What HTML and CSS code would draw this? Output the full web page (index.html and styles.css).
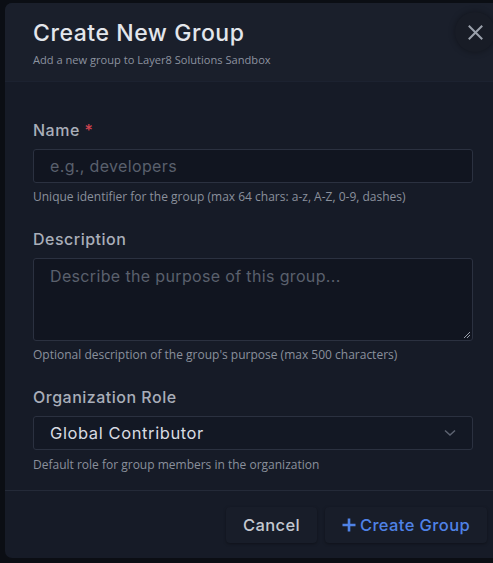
FILE: index.html
```html
<!DOCTYPE html>
<html>
<head>
<meta charset="utf-8">
<link rel="stylesheet" href="styles.css">
</head>
<body>
<div class="modal">
  <div class="modal-header">
    <h1 class="title">Create New Group</h1>
    <p class="subtitle">Add a new group to Layer8 Solutions Sandbox</p>
    <button class="close" aria-label="Close">
      <svg width="15" height="15" viewBox="0 0 15 15"><path d="M1.5 1.5 L13.5 13.5 M13.5 1.5 L1.5 13.5" stroke="#9aa0ab" stroke-width="2" stroke-linecap="square" fill="none"/></svg>
    </button>
  </div>
  <div class="modal-body">
    <div class="field">
      <label class="label">Name <span class="req">*</span></label>
      <div class="input"><span class="placeholder">e.g., developers</span></div>
      <p class="help">Unique identifier for the group (max 64 chars: a-z, A-Z, 0-9, dashes)</p>
    </div>
    <div class="field">
      <label class="label">Description</label>
      <div class="input textarea"><span class="placeholder">Describe the purpose of this group...</span>
        <svg class="grip" width="8" height="8" viewBox="0 0 8 8"><path d="M7 1 L1 7 M7 4 L4 7" stroke="#9aa0ab" stroke-width="1" fill="none"/></svg>
      </div>
      <p class="help">Optional description of the group's purpose (max 500 characters)</p>
    </div>
    <div class="field">
      <label class="label">Organization Role</label>
      <div class="input select"><span class="value">Global Contributor</span>
        <svg width="12" height="8" viewBox="0 0 12 8"><path d="M1 1.5 L6 6 L11 1.5" stroke="#5d6371" stroke-width="1.5" fill="none"/></svg>
      </div>
      <p class="help help-last">Default role for group members in the organization</p>
    </div>
  </div>
  <div class="modal-footer">
    <button class="btn btn-cancel">Cancel</button>
    <button class="btn btn-primary"><svg width="14" height="14" viewBox="0 0 14 14"><path d="M7 0.5 V13.5 M0.5 7 H13.5" stroke="#4f82e6" stroke-width="2.6" fill="none"/></svg>Create Group</button>
  </div>
</div>
</body>
</html>
```
FILE: styles.css
```css
html, body {
  margin: 0;
  padding: 0;
  background: #0b0e14;
  overflow: hidden;
  height: 563px;
}
body {
  padding: 3px 0 0 5px;
  box-sizing: border-box;
  font-family: "Inter", "Open Sans", sans-serif;
}
.modal {
  width: 496px;
  height: 555px;
  background: #161b27;
  border-radius: 7px;
  overflow: hidden;
  display: flex;
  flex-direction: column;
}
.modal-header {
  position: relative;
  height: 79px;
  background: #1a1f2b;
  padding: 15px 28px 0 28px;
  box-sizing: border-box;
  border-bottom: 1px solid #1c2230;
}
.title {
  margin: 0;
  font-size: 23px;
  font-weight: 500;
  color: #e3e6ec;
  line-height: 30px;
  letter-spacing: 0.55px;
}
.subtitle {
  margin: 5px 0 0 0;
  font-family: "Open Sans", sans-serif;
  font-size: 11.1px;
  color: #8d93a0;
  line-height: 14px;
}
.close {
  position: absolute;
  top: 9px;
  left: 450px;
  width: 40px;
  height: 40px;
  border-radius: 50%;
  border: none;
  background: #181c26;
  box-shadow: 0 0 6px rgba(0,0,0,0.35);
  display: flex;
  align-items: center;
  justify-content: center;
  padding: 0;
}
.modal-body {
  padding: 38px 28px 0 28px;
  flex: 1;
  display: flex;
  flex-direction: column;
  gap: 24px;
}
.field {
  display: flex;
  flex-direction: column;
}
.label {
  font-size: 16px;
  font-weight: 500;
  color: #a9aeb9;
  line-height: 20px;
  margin-bottom: 9px;
  letter-spacing: 0.5px;
}
.req { color: #d0434f; }
.input {
  height: 34px;
  width: 440px;
  box-sizing: border-box;
  border: 1px solid #2b3140;
  border-radius: 3px;
  background: #111520;
  display: flex;
  align-items: center;
  padding: 0 16px;
  font-size: 16px;
  letter-spacing: 0.35px;
}
.placeholder { color: #5a606d; }
.textarea {
  height: 83px;
  align-items: flex-start;
  padding-top: 7px;
  position: relative;
}
.grip { position: absolute; right: 1px; bottom: 1px; }
.select {
  justify-content: space-between;
  background: #131824;
  padding-right: 16px;
  font-size: 16.5px;
  letter-spacing: 0.6px;
}
.value { color: #d8dbe2; }
.help {
  margin: 6px 0 0 0;
  font-family: "Open Sans", sans-serif;
  font-size: 12px;
  color: #8a909c;
  line-height: 16px;
}
.help-last { margin-top: 7px; }
.modal-footer {
  height: 68px;
  border-top: 1px solid #242a38;
  display: flex;
  justify-content: flex-end;
  align-items: flex-start;
  gap: 8px;
  padding: 16px 14px 0 0;
  box-sizing: border-box;
}
.btn {
  height: 36px;
  border: none;
  border-radius: 4px;
  background: #181d29;
  box-shadow: 0 1px 3px rgba(0,0,0,0.35);
  font-family: "Inter", sans-serif;
  font-size: 16.5px;
  font-weight: 500;
  letter-spacing: 0.4px;
  display: flex;
  align-items: center;
  gap: 4px;
  padding: 0;
}
.btn-cancel { color: #c4c8d0; width: 91px; justify-content: center; }
.btn-primary { color: #4f82e6; width: 162px; justify-content: center; }
```
